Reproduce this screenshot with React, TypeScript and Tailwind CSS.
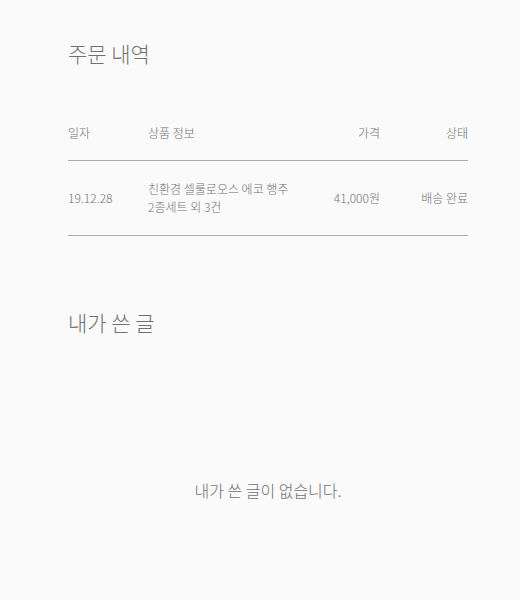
const font = { fontFamily: '"Noto Sans CJK KR", "Noto Sans", sans-serif' };

export default function App() {
  return (
    <div
      className="min-h-[600px] bg-[#fafafa] px-[68px] pt-[39px] text-[#707070]"
      style={font}
    >
      {/* 주문 내역 */}
      <h2 className="text-[21px] leading-[28px] font-light">주문 내역</h2>

      <div className="mt-[57px] w-[400px]">
        <div className="flex border-b border-[#aaa] pb-[18px] text-[12px] leading-[18px] font-light">
          <div className="w-[80px] shrink-0">일자</div>
          <div className="min-w-0 flex-1">상품 정보</div>
          <div className="w-[90px] shrink-0 text-right">가격</div>
          <div className="w-[88px] shrink-0 text-right">상태</div>
        </div>
        <div className="flex items-center border-b border-[#aaa] py-[19px] text-[12px] leading-[18px] font-light">
          <div className="w-[80px] shrink-0">19.12.28</div>
          <div className="min-w-0 flex-1 whitespace-nowrap">
            <span className="block">친환경 셀룰로오스 에코 행주</span>
            <span className="block">2종세트 외 3건</span>
          </div>
          <div className="w-[90px] shrink-0 text-right">41,000원</div>
          <div className="w-[88px] shrink-0 text-right">배송 완료</div>
        </div>
      </div>

      {/* 내가 쓴 글 */}
      <h2 className="mt-[72px] text-[21px] leading-[28px] font-light">내가 쓴 글</h2>

      <p className="mt-[143px] w-[400px] text-center text-[16px] leading-[22px] font-light">
        내가 쓴 글이 없습니다.
      </p>
    </div>
  );
}
